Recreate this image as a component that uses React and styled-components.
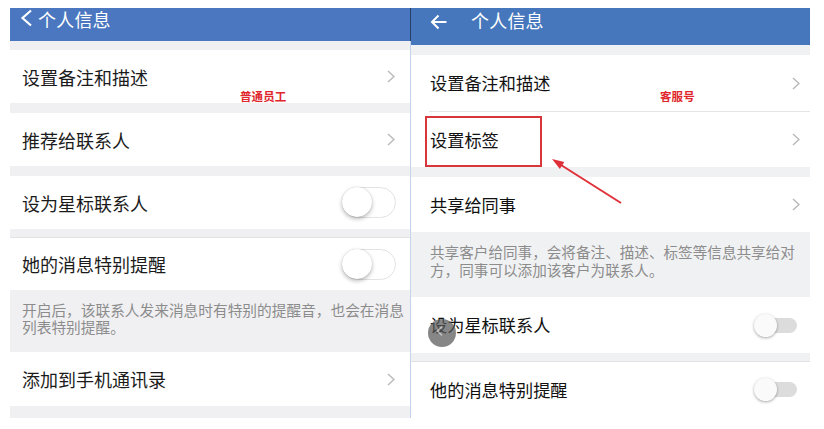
import React from "react";
import styled, { createGlobalStyle } from "styled-components";

const GlobalStyle = createGlobalStyle`
  html, body { margin: 0; padding: 0; background: #ffffff; }
  body { font-family: "Noto Sans CJK SC", "Noto Sans", sans-serif; }
  * { box-sizing: border-box; }
`;

const Page = styled.div`
  position: relative;
  width: 824px;
  height: 429px;
  display: flex;
  align-items: flex-start;
  padding: 8px 0 0 10px;
  overflow: hidden;
`;

const Phone = styled.div`
  width: ${(p) => p.$w}px;
  display: flex;
  flex-direction: column;
  background: ${(p) => p.$bg};
  border-right: ${(p) => (p.$edge ? `1px solid ${p.$edge}` : "none")};
`;

const Header = styled.div`
  position: relative;
  height: ${(p) => p.$h}px;
  background: ${(p) => p.$bg};
  display: flex;
  align-items: flex-start;
  gap: ${(p) => p.$gap}px;
  padding: ${(p) => p.$pt}px 0 0 ${(p) => p.$pl}px;
  color: #ffffff;
  ${(p) =>
    p.$divider &&
    `&::after { content: ""; position: absolute; right: -1px; top: 0; bottom: 0; width: 1px; background: #27406a; }`}
`;

const Title = styled.div`
  font-size: 18px;
  line-height: 20px;
  letter-spacing: 0.2px;
  color: #ffffff;
`;

const Gap = styled.div`
  height: ${(p) => p.$h}px;
  border-bottom: ${(p) => (p.$line ? "1px solid #e2e2e4" : "none")};
`;

const Row = styled.div`
  height: ${(p) => p.$h}px;
  background: #ffffff;
  display: flex;
  align-items: center;
  justify-content: space-between;
  padding: 0 ${(p) => p.$pr}px 0 ${(p) => p.$pl}px;
  font-size: ${(p) => p.$fs}px;
  color: ${(p) => p.$color || "#1b1b1b"};
`;

const Label = styled.span`
  line-height: 22px;
`;

const Divider = styled.div`
  height: 1px;
  background: #ffffff;
  padding-left: ${(p) => p.$indent}px;
  &::before {
    content: "";
    display: block;
    height: 1px;
    background: #e4e4e6;
  }
`;

const Note = styled.div`
  height: ${(p) => p.$h}px;
  padding: ${(p) => p.$pt}px 10px 0 ${(p) => p.$pl}px;
  font-size: ${(p) => p.$fs}px;
  line-height: ${(p) => p.$lh}px;
  color: #8c8c8c;
  white-space: nowrap;
`;

const IosTrack = styled.div`
  width: 54px;
  height: 31px;
  border-radius: 16px;
  border: 1.5px solid #e3e3e3;
  background: #ffffff;
  position: relative;
`;

const IosKnob = styled.div`
  position: absolute;
  left: -1px;
  top: -1px;
  width: 30px;
  height: 30px;
  border-radius: 50%;
  background: #ffffff;
  box-shadow: 0 2px 4px rgba(0, 0, 0, 0.28), 0 0 1px rgba(0, 0, 0, 0.2);
`;

const DroidTrack = styled.div`
  width: 40px;
  height: 15px;
  border-radius: 8px;
  background: #dcdcdc;
  position: relative;
  margin-right: 1px;
`;

const DroidKnob = styled.div`
  position: absolute;
  left: -3px;
  top: -4px;
  width: 23px;
  height: 23px;
  border-radius: 50%;
  background: #fafafa;
  box-shadow: 0 1px 3px rgba(0, 0, 0, 0.35);
`;

const Annotation = styled.div`
  position: absolute;
  left: ${(p) => p.$x}px;
  top: ${(p) => p.$y}px;
  font-size: 11.5px;
  line-height: 12px;
  font-weight: 700;
  color: #e0262c;
  letter-spacing: 0.1px;
`;

const Highlight = styled.div`
  position: absolute;
  left: 425px;
  top: 116px;
  width: 117px;
  height: 51px;
  border: 2px solid #d9363c;
`;

const Overlay = styled.svg`
  position: absolute;
  left: 0;
  top: 0;
  pointer-events: none;
`;

const GestureButton = styled.div`
  position: absolute;
  left: 428px;
  top: 319px;
  width: 28px;
  height: 28px;
  border-radius: 50%;
  background: rgba(88, 88, 88, 0.72);
  display: flex;
  align-items: center;
  justify-content: center;
`;

const Chevron = ({ color = "#b8b8b8" }) => (
  <svg width="8" height="13" viewBox="0 0 8 13">
    <polyline points="1,1 7,6.5 1,12" fill="none" stroke={color} strokeWidth="1.4" />
  </svg>
);

const BackChevron = () => (
  <svg width="13" height="18" viewBox="0 0 13 18">
    <polyline points="11,1.5 2.5,9 11,16.5" fill="none" stroke="#fff" strokeWidth="2.2" strokeLinejoin="miter" />
  </svg>
);

const BackArrow = () => (
  <svg width="17" height="16" viewBox="0 0 17 16" style={{ marginTop: 4 }}>
    <line x1="2" y1="8" x2="16.5" y2="8" stroke="#fff" strokeWidth="2" />
    <polyline points="8.5,1.5 2,8 8.5,14.5" fill="none" stroke="#fff" strokeWidth="2" />
  </svg>
);

const IosToggle = () => (
  <IosTrack>
    <IosKnob />
  </IosTrack>
);

const DroidSwitch = () => (
  <DroidTrack>
    <DroidKnob />
  </DroidTrack>
);

const LeftRow = ({ h, children, right }) => (
  <Row $h={h} $pl={12} $pr={right === "toggle" ? 14 : 15} $fs={18}>
    <Label>{children}</Label>
    {right === "toggle" ? <IosToggle /> : <Chevron />}
  </Row>
);

const RightRow = ({ h, children, right }) => (
  <Row $h={h} $pl={19} $pr={right === "switch" ? 12 : 10} $fs={17.2} $color="#111">
    <Label>{children}</Label>
    {right === "switch" ? <DroidSwitch /> : <Chevron />}
  </Row>
);

export default function App() {
  return (
    <>
      <GlobalStyle />
      <Page>
        <Phone $w={401} $bg="#f0f0f2" $edge="#c3d4ec">
          <Header $h={33} $bg="#4a77bf" $gap={5} $pt={1} $pl={10} $divider>
            <BackChevron />
            <Title>个人信息</Title>
          </Header>
          <Gap $h={9} />
          <LeftRow h={53}>设置备注和描述</LeftRow>
          <Gap $h={10} />
          <LeftRow h={53}>推荐给联系人</LeftRow>
          <Gap $h={10} />
          <LeftRow h={53} right="toggle">设为星标联系人</LeftRow>
          <Gap $h={9} $line />
          <LeftRow h={52} right="toggle">她的消息特别提醒</LeftRow>
          <Note $h={62} $pt={11} $pl={12} $fs={14.7} $lh={17}>
            开启后，该联系人发来消息时有特别的提醒音，也会在消息
            <br />
            列表特别提醒。
          </Note>
          <LeftRow h={54}>添加到手机通讯录</LeftRow>
          <Gap $h={12} />
        </Phone>

        <Phone $w={399} $bg="#f0f1f3">
          <Header $h={37} $bg="#4677bd" $gap={24} $pt={2} $pl={19}>
            <BackArrow />
            <Title>个人信息</Title>
          </Header>
          <Gap $h={10} />
          <RightRow h={56}>设置备注和描述</RightRow>
          <Divider $indent={18} />
          <RightRow h={55}>设置标签</RightRow>
          <Gap $h={10} />
          <RightRow h={55}>共享给同事</RightRow>
          <Note $h={65} $pt={11} $pl={19} $fs={14.6} $lh={18}>
            共享客户给同事，会将备注、描述、标签等信息共享给对
            <br />
            方，同事可以添加该客户为联系人。
          </Note>
          <RightRow h={56} right="switch">设为星标联系人</RightRow>
          <Gap $h={9} $line />
          <RightRow h={55} right="switch">他的消息特别提醒</RightRow>
        </Phone>

        <Annotation $x={240} $y={90}>普通员工</Annotation>
        <Annotation $x={660} $y={90}>客服号</Annotation>
        <Highlight />
        <Overlay width="824" height="429" viewBox="0 0 824 429">
          <line x1="621" y1="203" x2="561" y2="165" stroke="#e0303a" strokeWidth="2" />
          <polygon points="552,159 564.3,162.1 559.9,168.9" fill="#e0303a" />
        </Overlay>
        <GestureButton>
          <svg width="10" height="12" viewBox="0 0 10 12" style={{ marginLeft: -4, marginTop: -4 }}>
            <polyline points="7,1.5 2.5,6 7,10.5" fill="none" stroke="rgba(255,255,255,0.55)" strokeWidth="1.2" />
          </svg>
        </GestureButton>
      </Page>
    </>
  );
}
